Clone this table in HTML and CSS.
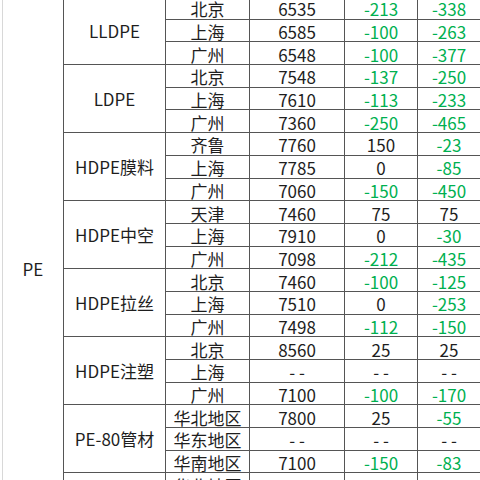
FILE: index.html
```html
<!DOCTYPE html>
<html lang="zh-CN">
<head>
<meta charset="utf-8">
<title>PE价格表</title>
<link rel="stylesheet" href="styles.css">
</head>
<body>
<table class="grid">
  <colgroup>
    <col class="c1"><col class="c2"><col class="c3"><col class="c4"><col class="c5"><col class="c6">
  </colgroup>
  <tbody>
    <tr><td class="cat" rowspan="24">PE</td><td class="grp" rowspan="3">LLDPE</td><td>北京</td><td>6535</td><td class="dn">-213</td><td class="dn">-338</td></tr>
    <tr><td>上海</td><td>6585</td><td class="dn">-100</td><td class="dn">-263</td></tr>
    <tr><td>广州</td><td>6548</td><td class="dn">-100</td><td class="dn">-377</td></tr>
    <tr><td class="grp" rowspan="3">LDPE</td><td>北京</td><td>7548</td><td class="dn">-137</td><td class="dn">-250</td></tr>
    <tr><td>上海</td><td>7610</td><td class="dn">-113</td><td class="dn">-233</td></tr>
    <tr><td>广州</td><td>7360</td><td class="dn">-250</td><td class="dn">-465</td></tr>
    <tr><td class="grp" rowspan="3">HDPE膜料</td><td>齐鲁</td><td>7760</td><td>150</td><td class="dn">-23</td></tr>
    <tr><td>上海</td><td>7785</td><td>0</td><td class="dn">-85</td></tr>
    <tr><td>广州</td><td>7060</td><td class="dn">-150</td><td class="dn">-450</td></tr>
    <tr><td class="grp" rowspan="3">HDPE中空</td><td>天津</td><td>7460</td><td>75</td><td>75</td></tr>
    <tr><td>上海</td><td>7910</td><td>0</td><td class="dn">-30</td></tr>
    <tr><td>广州</td><td>7098</td><td class="dn">-212</td><td class="dn">-435</td></tr>
    <tr><td class="grp" rowspan="3">HDPE拉丝</td><td>北京</td><td>7460</td><td class="dn">-100</td><td class="dn">-125</td></tr>
    <tr><td>上海</td><td>7510</td><td>0</td><td class="dn">-253</td></tr>
    <tr><td>广州</td><td>7498</td><td class="dn">-112</td><td class="dn">-150</td></tr>
    <tr><td class="grp" rowspan="3">HDPE注塑</td><td>北京</td><td>8560</td><td>25</td><td>25</td></tr>
    <tr><td>上海</td><td>- -</td><td>- -</td><td>- -</td></tr>
    <tr><td>广州</td><td>7100</td><td class="dn">-100</td><td class="dn">-170</td></tr>
    <tr><td class="grp" rowspan="3">PE-80管材</td><td>华北地区</td><td>7800</td><td>25</td><td class="dn">-55</td></tr>
    <tr><td>华东地区</td><td>- -</td><td>- -</td><td>- -</td></tr>
    <tr><td>华南地区</td><td>7100</td><td class="dn">-150</td><td class="dn">-83</td></tr>
    <tr><td class="grp" rowspan="3">PE-100管材</td><td>华北地区</td><td>8000</td><td>25</td><td class="dn">-55</td></tr>
    <tr><td>华东地区</td><td>- -</td><td>- -</td><td>- -</td></tr>
    <tr><td>华南地区</td><td>8100</td><td class="dn">-150</td><td class="dn">-83</td></tr>
  </tbody>
</table>
</body>
</html>
```
FILE: styles.css
```css
html, body {
  margin: 0;
  padding: 0;
  background: #ffffff;
}
body {
  font-family: "Noto Sans CJK SC", "Noto Sans", sans-serif;
  font-size: 17px;
  color: #1e1e1e;
}
.grid {
  border-collapse: collapse;
  table-layout: fixed;
  width: 478px;
  margin: -4px 0 0 2px;
}
.c1 { width: 61px; }
.c2 { width: 102px; }
.c3 { width: 84px; }
.c4 { width: 95px; }
.c5 { width: 73px; }
.c6 { width: 63px; }
.grid tr { height: 22.7px; }
.grid td {
  border: 1px solid #555555;
  padding: 2px 0 0 0;
  text-align: center;
  vertical-align: middle;
  line-height: 19px;
  white-space: nowrap;
}
.grid td.cat {
  border-left: 1px solid #d8d8d8;
  padding-top: 0;
}
.grid td.grp { padding-top: 0; }
.dn { color: #00b050; }
```
